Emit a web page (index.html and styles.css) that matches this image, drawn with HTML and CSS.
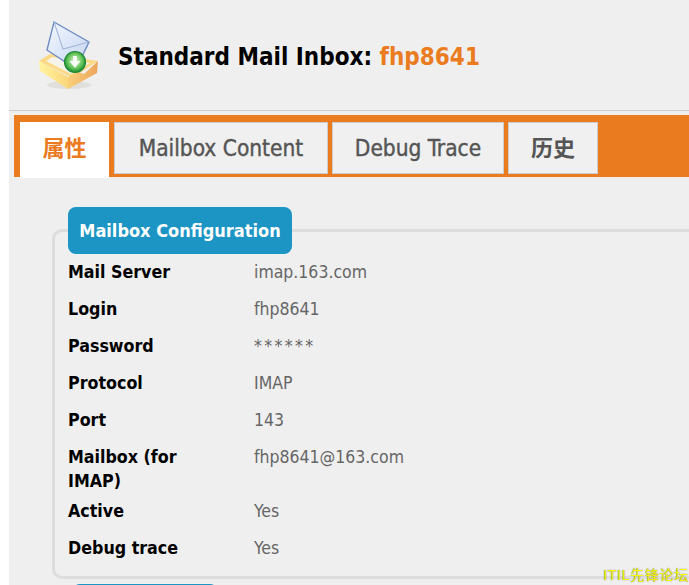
FILE: index.html
```html
<!DOCTYPE html>
<html>
<head>
    <title>Standard Mail Inbox</title>
    <link rel="stylesheet" href="styles.css">
</head>
<body>
    <div class="page">
        <div class="page-header">
            <svg class="inbox-icon" width="66" height="72" viewBox="36 18 66 72">
                <defs>
                    <linearGradient id="envelope" x1="0" y1="0" x2="1" y2="1">
                        <stop offset="0" stop-color="#f4f8ff"/>
                        <stop offset="1" stop-color="#c3d3f0"/>
                    </linearGradient>
                    <linearGradient id="wallLeft" x1="0" y1="0" x2="1" y2="0">
                        <stop offset="0" stop-color="#fff3a0"/>
                        <stop offset="1" stop-color="#fbd67a"/>
                    </linearGradient>
                    <linearGradient id="wallRight" x1="0" y1="0" x2="1" y2="0">
                        <stop offset="0" stop-color="#f9d07c"/>
                        <stop offset="1" stop-color="#eda55c"/>
                    </linearGradient>
                    <radialGradient id="badge" cx="0.5" cy="0.45" r="0.55">
                        <stop offset="0" stop-color="#e4f8d8"/>
                        <stop offset="0.6" stop-color="#6cc860"/>
                        <stop offset="1" stop-color="#178a2e"/>
                    </radialGradient>
                </defs>
                <ellipse cx="69" cy="84" rx="22" ry="4" fill="#bdb8ae" opacity="0.3"/>
                <path d="M39 60 L50 53 L98 60 L72 77 Z" fill="#fbd985"/>
                <path d="M46 60 L52 56 L90 62 L71 73 Z" fill="#f6f3ea"/>
                <path d="M54 21 L89 41 L76 68 L47 49 Z" fill="url(#envelope)" stroke="#6f8cc0" stroke-width="1.4"/>
                <path d="M54 21 L63 48 L89 41" fill="none" stroke="#a3b7dc" stroke-width="1.1"/>
                <path d="M39 60 L68 76 L68 88 L40 70 Z" fill="url(#wallLeft)"/>
                <path d="M68 76 L78 71 L84 73 L98 60 L97 72 L68 88 Z" fill="url(#wallRight)"/>
                <circle cx="75" cy="61" r="10.5" fill="url(#badge)" stroke="#1f8a34" stroke-width="1.2"/>
                <path d="M73 55 H77 V60 H80.5 L75 67 L69.5 60 H73 Z" fill="#ffffff" opacity="0.9"/>
            </svg>
            <h1 class="page-title">Standard Mail Inbox: <span class="hilite">fhp8641</span></h1>
        </div>

        <div class="tabs">
            <a class="tab tab-active">属性</a>
            <a class="tab tab-content">Mailbox Content</a>
            <a class="tab tab-debug">Debug Trace</a>
            <a class="tab tab-history">历史</a>
        </div>

        <div class="tab-body">
            <div class="fieldset">
                <div class="legend">Mailbox Configuration</div>
                <div class="details">
                    <div class="row"><div class="label">Mail Server</div><div class="value">imap.163.com</div></div>
                    <div class="row"><div class="label">Login</div><div class="value">fhp8641</div></div>
                    <div class="row"><div class="label">Password</div><div class="value value-secret">******</div></div>
                    <div class="row"><div class="label">Protocol</div><div class="value">IMAP</div></div>
                    <div class="row"><div class="label">Port</div><div class="value">143</div></div>
                    <div class="row"><div class="label"><span class="label-text">Mailbox (for IMAP)</span></div><div class="value">fhp8641@163.com</div></div>
                    <div class="row"><div class="label">Active</div><div class="value">Yes</div></div>
                    <div class="row"><div class="label">Debug trace</div><div class="value">Yes</div></div>
                </div>
            </div>
            <div class="next-legend"></div>
        </div>
    </div>
    <div class="watermark">ITIL先锋论坛</div>
</body>
</html>
```

FILE: styles.css
```css
body {
    margin: 0;
    height: 585px;
    overflow: hidden;
    background-color: white;
    font-family: "DejaVu Sans Condensed", "DejaVu Sans", "Noto Sans CJK SC", sans-serif;
    font-stretch: condensed;
    font-size: 18px;
}
.page {
    margin-left: 9px;
    height: 585px;
    background-color: #efefef;
    overflow: hidden;
}
.page-header {
    display: flex;
    align-items: center;
    box-sizing: border-box;
    height: 111px;
    padding-left: 27px;
    border-bottom: 1px solid #ccc;
}
.inbox-icon {
    flex: none;
    margin-top: -1px;
}
.page-title {
    margin: 4px 0 0 16px;
    font-size: 24px;
    font-weight: bold;
    color: black;
}
.hilite {
    color: #ea7b1f;
}
.tabs {
    display: flex;
    margin: 4px 0 0 5px;
    height: 62px;
    box-sizing: border-box;
    padding: 7px 0 0 6px;
    background-color: #ea7b1f;
    gap: 4px;
}
.tab {
    display: flex;
    align-items: center;
    justify-content: center;
    box-sizing: border-box;
    height: 52px;
    background-color: #f0f0f0;
    border: 1px solid #ccc;
    color: #555;
    font-size: 22.5px;
    -webkit-text-stroke: 0.4px #555;
}
.tab-active {
    width: 89px;
    height: 56px;
    margin-right: 1px;
    padding-bottom: 8px;
    background-color: white;
    border: none;
    color: #ea7b1f;
    font-size: 22px;
    font-weight: bold;
    -webkit-text-stroke: 0;
}
.tab-content {
    width: 214px;
}
.tab-debug {
    width: 172px;
}
.tab-history {
    width: 90px;
    padding-bottom: 4px;
    font-size: 22px;
    font-weight: bold;
    -webkit-text-stroke: 0;
}
.tab-body {
    padding: 30px 0 0 43px;
}
.fieldset {
    position: relative;
    box-sizing: border-box;
    width: 700px;
    height: 350px;
    margin-top: 22px;
    border: 3px solid #ddd;
    border-radius: 10px;
    padding: 0 0 0 13px;
}
.legend {
    position: absolute;
    left: 13px;
    top: -25px;
    width: 224px;
    height: 47px;
    line-height: 47px;
    text-align: center;
    background-color: #1c94c4;
    border-radius: 8px;
    color: white;
    font-size: 18px;
    font-weight: bold;
}
.details {
    padding-top: 28px;
}
.row {
    display: flex;
    min-height: 37px;
    box-sizing: border-box;
    padding-bottom: 6px;
    line-height: 24px;
}
.label {
    width: 186px;
    flex: none;
    font-size: 17.7px;
    font-weight: bold;
    color: black;
}
.label-text {
    display: block;
    width: 130px;
}
.value {
    color: #666;
    font-size: 17.5px;
}
.value-secret {
    letter-spacing: 2.4px;
}
.next-legend {
    width: 146px;
    height: 20px;
    margin: 5px 0 0 20px;
    background-color: #1c94c4;
    border-radius: 8px 8px 0 0;
}
.watermark {
    position: absolute;
    right: 0;
    top: 564px;
    color: #ffff00;
    font-family: "Liberation Sans", "Noto Sans CJK SC", sans-serif;
    font-size: 14px;
    letter-spacing: 0.7px;
    text-shadow: 0 0 1px #333;
}
```
